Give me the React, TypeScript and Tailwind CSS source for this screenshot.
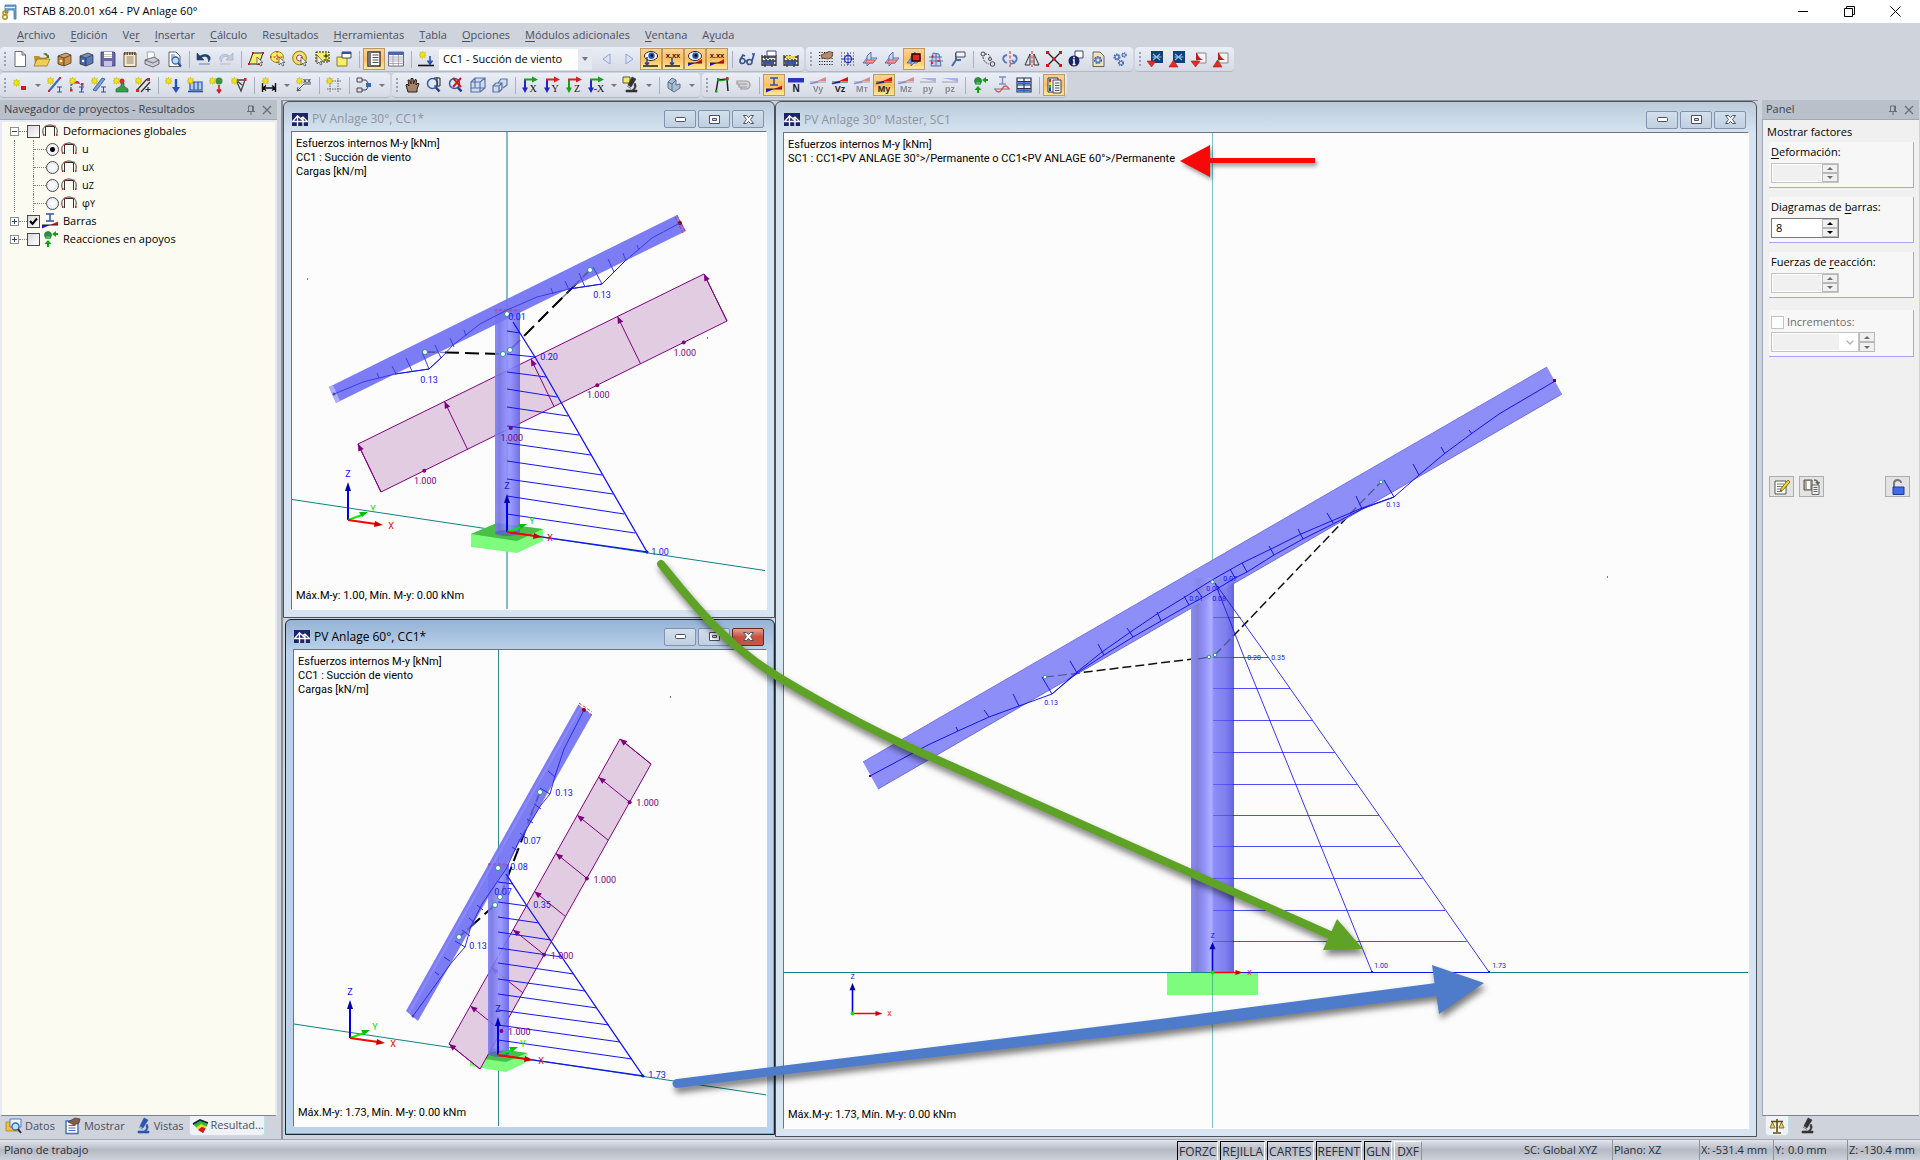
import { useState } from "react";
import type { ReactNode } from "react";
import clsx from "clsx";

const UI = "font-['Open_Sans','Noto_Sans',sans-serif]";
const VIEW = "font-['Roboto','Liberation_Sans',sans-serif]";

type Pt = [number, number];

const pts = (list: Pt[]) => list.map((p) => p.join(",")).join(" ");

const lerp = (a: Pt, b: Pt, t: number): Pt => [
  a[0] + (b[0] - a[0]) * t,
  a[1] + (b[1] - a[1]) * t,
];

/* ---------- toolbar icons, 16x16 ---------- */

function Star({ x = 0, y = 0 }: { x?: number; y?: number }) {
  return (
    <path
      transform={`translate(${x} ${y})`}
      d="M3.5 0l.8 2.2L6.5 1.2 5.6 3.4 7 4.2l-1.7.5.8 2-2-1L3.5 7.6l-.7-2-2 1 .8-2L0 4l1.7-.7L.8 1.2 2.8 2z"
      fill="#f4e60a"
      stroke="#b8a000"
      strokeWidth=".4"
    />
  );
}

const Cursor = () => (
  <path d="M9 6v8l2-2 1.5 3 1.5-.7L12.6 11.5H15z" fill="#eee" stroke="#444" strokeWidth=".7" />
);

const Lens = ({ mark }: { mark?: ReactNode }) => (
  <>
    <path d="M9.5 10l4 4.5" stroke="#2c3f86" strokeWidth="2.6" />
    <circle cx="6.5" cy="6.5" r="5" fill="#dce9fb" stroke="#3b58a8" strokeWidth="1.5" />
    {mark}
  </>
);

function Moment({ name, dim, flip }: { name: string; dim?: boolean; flip?: boolean }) {
  return (
    <g opacity={dim ? 0.45 : 1}>
      {flip ? (
        <path d="M0 1h16v3.5z" fill="#6a6af0" />
      ) : (
        <>
          <path d="M0 6.5L8 4v1.5L0 7z" fill="#1414d8" stroke="#1414d8" strokeWidth=".6" />
          <path d="M8 3.5L16 0v4H8z" fill="#e01010" />
        </>
      )}
      <path d="M0 5h16" stroke="#222" strokeWidth=".8" />
      <text x="8" y="15" textAnchor="middle" fontSize="9" fontWeight="bold" fontFamily="Liberation Sans, sans-serif" fill="#222">
        {name}
      </text>
    </g>
  );
}

function AxisIcon({ name, across, down }: { name: string; across: string; down: string }) {
  return (
    <>
      <path d="M3 2v12" stroke={down} strokeWidth="2" />
      <path d="M0 10.5h6L3 16z" fill={down} />
      <path d="M2 2.5h10" stroke={across} strokeWidth="2" />
      <path d="M10-.5l6 3-6 3z" fill={across} />
      <text x="11" y="15" textAnchor="middle" fontSize="10" fontFamily="Liberation Serif, serif" fill="#111">
        {name}
      </text>
    </>
  );
}

const Plane = ({ hot }: { hot?: boolean }) => (
  <g>
    <path d="M1 12l4-5h10l-4 5z" fill={hot ? "#8fb0f0" : "#c9d8f4"} stroke="#4a68a8" strokeWidth=".9" />
    <path d="M5 5l4-4v10l-4 4z" fill={hot ? "#8fb0f0" : "#c9d8f4"} stroke="#4a68a8" strokeWidth=".9" />
    {hot ? (
      <path d="M6 3h8v7H6z" fill="#ef2418" stroke="#200" strokeWidth="1.4" />
    ) : (
      <path d="M5 9h8l-2 3H3z" fill="#e8a0a0" stroke="#d05050" strokeWidth=".9" />
    )}
  </g>
);

const Frame = () => (
  <>
    <path d="M3.5 13V3.5h9V13M1.5 12C0 8 1 4 3.5 3.5 6 1.5 10 1.5 12.5 3.5 15 4 16 8 14.5 12" fill="none" stroke="#333" />
    <path d="M3 2.5h1.5V4H3zM12 2.5h1.5V4H12zM1 11h1.5v2H1zM14 11h1.5v2H14z" fill="#d22" />
  </>
);

const Support = () => (
  <>
    <circle cx="6" cy="4" r="3.5" fill="#2f9144" stroke="#15602a" strokeWidth=".6" />
    <path d="M3 8h6L7.5 5h-3z" fill="#54b468" />
    <path d="M6 16v-4M16 3h-3" fill="none" stroke="#08a808" strokeWidth="2" />
    <path d="M2.5 13L6 9l3.5 4zM14 0v6l-4-3z" fill="#08a808" />
  </>
);

const Cube = ({ color }: { color: string }) => (
  <>
    <path d="M2 5l8-3 5 2-7 3z" fill={color} opacity=".7" />
    <path d="M2 5l6 2v8l-6-2z" fill={color} />
    <path d="M8 7l7-3v8l-7 3z" fill={color} opacity=".85" />
    <path d="M2 5l8-3 5 2v8l-7 3-6-2zM8 7v8M8 7l7-3M2 5l6 2" fill="none" stroke="#33291a" strokeWidth=".7" />
    <circle cx="5" cy="10" r="1.3" fill="#f5e9c8" />
  </>
);

const Eye = () => (
  <>
    <ellipse cx="8" cy="5" rx="6.5" ry="4.5" fill="#fff" stroke="#222" />
    <circle cx="8.5" cy="4.7" r="3.2" fill="#2b55b8" />
    <circle cx="8.8" cy="4.5" r="1.3" fill="#000" />
  </>
);

const RedBlue = () => (
  <>
    <path d="M1 15l7-3H1z" fill="#1818e0" />
    <path d="M8 12l7-4v4z" fill="#e01010" />
    <path d="M1 12h14" stroke="#222" />
  </>
);

const XX = () => (
  <text x="8" y="6.5" textAnchor="middle" fontSize="7.5" fontWeight="bold" fontFamily="Liberation Sans, sans-serif" fill="#222">
    x.xx
  </text>
);

const Abacus = () => (
  <path d="M1 4v11M15 4v11M1 6h14M1 10h14M1 14h14M4 4v4M7 4v4M5 8v4M9 8v4M12 8v4M4 12v4M11 12v4" stroke="#333" strokeWidth="1.3" fill="none" />
);

const Xls = ({ up, red }: { up?: boolean; red?: boolean }) => (
  <>
    {red ? (
      <path d="M6 2h9v10H6z" fill="#f4f4f8" stroke="#888" />
    ) : (
      <>
        <path d="M4 0h12v12H4z" fill="#123f78" />
        <path d="M6 3l7 6M13 3L6 9M5.5 6h9" stroke="#7fc4ee" strokeWidth="1.2" />
      </>
    )}
    {red && <path d="M5 1c2 3 3 6 7 8H5z" fill="#b81c1c" />}
    <path d={up ? "M0 16h9L4.5 9z" : "M0 10h9l-4.5 6z"} fill="#e62c22" stroke="#8c120c" strokeWidth=".5" />
  </>
);

const Gear = ({ x, y, r }: { x: number; y: number; r: number }) => (
  <>
    <circle cx={x} cy={y} r={r} fill="none" stroke="#3d5ea8" strokeWidth={r * 0.7} strokeDasharray={`${r * 0.55} ${r * 0.3}`} />
    <circle cx={x} cy={y} r={r * 0.75} fill="none" stroke="#5f80c8" strokeWidth={r * 0.5} />
  </>
);

const Page = ({ fill = "#fff" }: { fill?: string }) => (
  <path d="M3 1h7l4 4v10.5H3z" fill={fill} stroke="#555" strokeWidth=".9" />
);

const Micro = ({ c = "#333" }: { c?: string }) => (
  <path d="M9 0l4 2-5 8-3-2zM3 15h11v-2h-3c2-2 3-4 1-7l-1 2c1 2 0 4-2 5H3zM4 9l4 2.5" fill={c} stroke={c} strokeWidth=".6" />
);

const Hand = () => (
  <path d="M4 15L2 8l1-1 2 2-1-6h1.5l1.5 4L7 1.500h2L9.500 7 11 2.500l1.500.5L12 8l2-2 1 .8-2 5.200v3z" fill="#a58468" stroke="#2a1e14" strokeWidth="1" />
);

const icons: Record<string, ReactNode> = {
  new: <path d="M3 .5h7L13.500 4v11.500H3zM10 .5V4h3.500" fill="#fff" stroke="#6b6b78" />,
  open: (
    <>
      <path d="M0 5h5l1.5 1.5H13V14H1z" fill="#b8922a" />
      <path d="M3 8h13l-3 7H0z" fill="#f0cd54" stroke="#8c6a14" strokeWidth=".7" />
      <path d="M9 3c3-2 4-1 5 1.5l1-1V7h-3l1-1c-1-2-2-2-4-3z" fill="#4d7a28" />
    </>
  ),
  boxBrown: <Cube color="#c8862c" />,
  boxBlue: <Cube color="#3d66b8" />,
  save: (
    <>
      <path d="M1 1h13l1 1v13H1z" fill="#6a66a8" stroke="#3d3a78" strokeWidth=".8" />
      <path d="M4 1h8v6H4z" fill="#fff" />
      <path d="M4 10h8v5H4z" fill="#c6c4dc" />
      <path d="M4 3.5h8M4 5.5h8" stroke="#aaa" strokeWidth=".7" />
    </>
  ),
  notes: (
    <>
      <path d="M2 2h12v13.5H2z" fill="#f4ecd2" stroke="#6b5636" />
      <path d="M2 2.5h12" stroke="#6b4a2c" strokeWidth="3" strokeDasharray="1.5 1" />
      <path d="M4.5 6h7M4.5 8h7M4.5 10h7M4.5 12h7" stroke="#8d7f66" />
    </>
  ),
  print: (
    <>
      <path d="M3 1h7l1 6-7 2z" fill="#fff" stroke="#889" strokeWidth=".7" />
      <path d="M1 9l9-3 5 3v4l-6 3-8-3z" fill="#c8ccd6" stroke="#555" strokeWidth=".8" />
      <path d="M1 9l8 3 6-3" fill="none" stroke="#555" strokeWidth=".8" />
    </>
  ),
  preview: (
    <>
      <Page />
      <path d="M5 4h4M5 6h6M5 8h4" stroke="#77a" />
      <circle cx="9.5" cy="9.5" r="3.5" fill="#bcdcf6" stroke="#3468b0" strokeWidth="1.3" />
      <path d="M12 12l3 3.5" stroke="#2c4f90" strokeWidth="2" />
    </>
  ),
  undo: <path d="M1 2v7h7L5.500 6.500C9 4 13 6 12.500 11 17 6 12 1 4 5zM3 13h11" fill="#24406e" stroke="#24406e" strokeWidth=".6" />,
  redo: <path d="M15 2v7H8l2.500-2.500C7 4 3 6 3.500 11-1 6 4 1 12 5zM2 13h11" fill="#c6cddc" stroke="#9aa5bc" strokeWidth=".6" />,
  selRhomb: (
    <>
      <path d="M5 2h10l-4 11H1z" fill="#f7ef6a" stroke="#222" />
      <path d="M4 1h2v2H4zM14 1h2v2h-2zM0 12h2v2H0zM10 12h2v2h-2z" fill="#e01010" />
      <Cursor />
    </>
  ),
  selEllipse: (
    <>
      <ellipse cx="7" cy="6" rx="6.5" ry="5.5" fill="#f7ef6a" stroke="#a08a10" />
      <path d="M7 0v12M0 6h14" stroke="#e01010" strokeDasharray="2 1.5" />
      <Cursor />
    </>
  ),
  selRing: (
    <>
      <circle cx="7.5" cy="7" r="6" fill="none" stroke="#f0e040" strokeWidth="3" />
      <circle cx="7.5" cy="7" r="6.8" fill="none" stroke="#555" strokeWidth=".7" />
      <circle cx="7.5" cy="7" r="3" fill="#fff" stroke="#d22" />
      <Cursor />
    </>
  ),
  selPlus: (
    <>
      <path d="M2 1h13v10H2z" fill="#f7ef6a" stroke="#222" strokeDasharray="2 1" />
      <path d="M12 2.5v5M9.5 5h5M9.5 9h5" stroke="#111" />
      <path d="M3 4v9l2-2 1.5 3 1.5-.7L6.5 10.5H9z" fill="#eee" stroke="#444" strokeWidth=".7" />
    </>
  ),
  selWindow: (
    <>
      <path d="M1 6h10v9H1z" fill="#f7ef6a" stroke="#8a7c1c" />
      <path d="M6 1h9v6H6z" fill="#fff" stroke="#446" />
      <path d="M6 2h9" stroke="#33539a" strokeWidth="2" />
    </>
  ),
  navigator: (
    <>
      <path d="M2 1h12v14H2z" fill="#fff" stroke="#333" strokeWidth="1.4" />
      <path d="M2.5 1H5v14H2.500z" fill="#777" />
      <path d="M6.5 4h6M6.5 6.5h6M6.5 9h6M6.5 11.5h6" stroke="#4c4c60" />
    </>
  ),
  table: (
    <>
      <path d="M.5 1h15v14H.5z" fill="#fff" stroke="#667" />
      <path d="M.5 2.5h15" stroke="#4c67a8" strokeWidth="3" />
      <path d="M.5 6h15M.5 8h15M.5 10h15M.5 12.5h15M5 4v11M10.500 4v11" stroke="#99a" strokeWidth=".8" />
    </>
  ),
  loadCase: (
    <>
      <Star x={1} />
      <path d="M0 14.5h16" stroke="#111" strokeWidth="1.6" />
      <path d="M12 5v7M9.5 9.5L12 13l2.500-3.500" fill="none" stroke="#2a4fb4" strokeWidth="1.6" />
    </>
  ),
  prev: <path d="M11 3v10L4 8z" fill="#dce4f6" stroke="#8fa3d8" />,
  next: <path d="M5 3v10l7-5z" fill="#dce4f6" stroke="#8fa3d8" />,
  eyeLoad: (
    <>
      <Eye />
      <path d="M0 15h15" stroke="#111" strokeWidth="1.4" />
      <path d="M4 6v8M2 11.5L4 14l2-2.500" fill="none" stroke="#24478e" strokeWidth="1.5" />
    </>
  ),
  valLoad: (
    <>
      <XX />
      <path d="M0 15h15" stroke="#111" strokeWidth="1.4" />
      <path d="M7 7v7M5 11.5L7 14l2-2.500" fill="none" stroke="#24478e" strokeWidth="1.5" />
    </>
  ),
  eyeRes: (
    <>
      <Eye />
      <RedBlue />
    </>
  ),
  valRes: (
    <>
      <XX />
      <RedBlue />
    </>
  ),
  glasses: (
    <path d="M1 10a2.500 2.500 0 105 0 2.500 2.500 0 10-5 0M8 11a2.500 2.500 0 105 0 2.500 2.500 0 10-5 0M6 10l2.500 0M1 9l3-5 2 1M13 10l2-7-2 0" fill="none" stroke="#3a548c" strokeWidth="1.7" />
  ),
  abacus1: (
    <>
      <Abacus />
      <path d="M6 0h9v5H6z" fill="#fff" stroke="#446" />
      <path d="M2 10.5h11v3H2z" fill="#3455b0" />
    </>
  ),
  abacus2: (
    <>
      <Abacus />
      <path d="M3 5h9v2.5H3z" fill="#e8da40" />
      <path d="M2 10.5h11v3H2z" fill="#3455b0" />
    </>
  ),
  gridHand: (
    <>
      <path d="M1 1.5h14M1 4.5h14M1 7.500h14M1 10.5h14M1 13.5h14" stroke="#222" strokeDasharray="1.2 1.3" />
      <path d="M3 4l8-3.500 4 1-1 4.500-4 2-6-1z" fill="#b48a68" stroke="#47311e" strokeWidth=".7" />
    </>
  ),
  gridSnap: (
    <>
      <path d="M1 2h14M1 5h14M1 8h14M1 11h14M1 14h14" stroke="#333" strokeDasharray="1 2" />
      <circle cx="8" cy="8" r="3.5" fill="#fff" stroke="#2434b8" strokeWidth="1.3" />
      <path d="M8 2v12M2 8h12" stroke="#2434b8" />
    </>
  ),
  plane1: <Plane />,
  plane2: <Plane />,
  plane3: <Plane hot />,
  building: (
    <>
      <path d="M3 15L5 2l6 1 2 12zM1 6h13M1 10h14M8 2v13" fill="#c5d3ee" stroke="#556fa6" />
      <path d="M3.5 4.5h2v2h-2zM9.5 9h2v2h-2zM3 11h2v2H3z" fill="#d22" />
    </>
  ),
  planeSet: (
    <>
      <path d="M2 15l4-6h5M6 9V2" fill="none" stroke="#4a68a4" strokeWidth="2" />
      <path d="M6 1h9v5H6z" fill="#f4f4fa" stroke="#446" />
    </>
  ),
  nodes: (
    <>
      <circle cx="3" cy="3" r="2" fill="none" stroke="#444" />
      <circle cx="12.5" cy="13" r="2.3" fill="none" stroke="#444" />
      <circle cx="10" cy="8" r="1.5" fill="none" stroke="#444" />
      <path d="M5 3c4 0 5 1 5 3M3 6c0 3 2 6 6 7" fill="none" stroke="#444" strokeDasharray="2 1" />
    </>
  ),
  rotate: (
    <>
      <path d="M5 4C0 5 0 10 5 12M11 4c5 1 5 6 0 8M8 13l4-1-2-3" fill="none" stroke="#5577bb" strokeWidth="1.8" />
      <path d="M8 0v16" stroke="#d22" strokeDasharray="3 1.5" />
    </>
  ),
  mirror: (
    <>
      <path d="M6 3v11H1zM10 3v11h5z" fill="none" stroke="#333" />
      <path d="M8 0v16" stroke="#d22" strokeDasharray="3 1.5" />
    </>
  ),
  cross: (
    <>
      <path d="M2 2l12 12M14 2L2 14" stroke="#222" strokeWidth="1.4" />
      <path d="M0 0h3v3H0zM13 0h3v3h-3zM0 13h3v3H0zM13 13h3v3h-3zM6.5 6.5h3v3h-3z" fill="#e01010" />
    </>
  ),
  info: (
    <>
      <path d="M7 0h8v7H7z" fill="#fff" stroke="#446" />
      <circle cx="6" cy="10" r="5.5" fill="#1b2266" />
      <path d="M6 5.8v1.8M4.8 9H6v4.5M4.5 13.5h3" stroke="#fff" strokeWidth="1.5" fill="none" />
    </>
  ),
  gearPage: (
    <>
      <Page fill="#f3e3bd" />
      <Gear x={8} y={9} r={3} />
    </>
  ),
  gears: (
    <>
      <Gear x={5} y={6} r={2.6} />
      <Gear x={12} y={4} r={2} />
      <Gear x={9} y={12} r={2.3} />
    </>
  ),
  xls1: <Xls />,
  xls2: <Xls up />,
  pdf1: <Xls red />,
  pdf2: <Xls red up />,

  addNode: (
    <>
      <Star x={1} y={2} />
      <path d="M9 9h5v4H9z" fill="#d81818" />
    </>
  ),
  addBar: (
    <>
      <path d="M2 14L13 1" stroke="#4169c0" strokeWidth="2" />
      <Star />
      <path d="M10 10h5M12.5 10v5M10 15h5" stroke="#2c4fa0" fill="none" />
      <path d="M12 0h2v2h-2zM1 13h2v2H1z" fill="#d22" />
    </>
  ),
  addArc: (
    <>
      <path d="M2 13V8l6-3 5 3v5" fill="none" stroke="#3d62b0" strokeWidth="1.4" strokeDasharray="3 1" />
      <Star />
      <path d="M10 10h5M12.5 10v5M10 15h5" stroke="#2c4fa0" fill="none" />
      <path d="M1 12h2.5v2.5H1zM7 4h2.5v2.5H7zM12 6h2.500v2.500H12z" fill="#d22" />
    </>
  ),
  addSurf: (
    <>
      <path d="M2 13l9-12 3 1L5 14z" fill="#7da0dc" stroke="#2c4f90" strokeWidth=".8" />
      <Star />
      <path d="M10 10h5M12.5 10v5M10 15h5" stroke="#2c4fa0" fill="none" />
    </>
  ),
  addSupport: (
    <>
      <circle cx="9" cy="4" r="2.5" fill="#d83030" />
      <path d="M8 6h3v3l4 3v3H3v-3l5-3z" fill="#3a9a4c" stroke="#1d6630" strokeWidth=".6" />
      <Star />
    </>
  ),
  addHinge: (
    <>
      <path d="M2 13L12 2M6 15L15 5" stroke="#333" strokeWidth="1.3" />
      <Star />
      <path d="M12 1h3v3h-3zM1 12h3v3H1z" fill="#d22" />
      <path d="M13 10v5M10.5 12.5h5" stroke="#222" />
    </>
  ),
  load1: (
    <>
      <Star />
      <path d="M11 2v9" stroke="#2a50b8" strokeWidth="2.4" />
      <path d="M7 10h8l-4 6z" fill="#2a50b8" />
    </>
  ),
  load2: (
    <>
      <path d="M3 5h12v8H3zM7 5v8M11 5v8" fill="#b7cdf4" stroke="#2a50b8" strokeWidth="1.2" />
      <path d="M1 14.5h15" stroke="#2a50b8" strokeWidth="1.6" />
      <Star />
    </>
  ),
  load3: (
    <>
      <circle cx="10" cy="4" r="3.5" fill="#379148" />
      <path d="M10 8v7M8 12.5l2 3 2-3" fill="none" stroke="#d01c1c" strokeWidth="1.6" />
      <Star />
    </>
  ),
  load4: (
    <>
      <path d="M5 3h9l-4 11zM5 3l6 5" fill="none" stroke="#444" strokeWidth="1.3" />
      <path d="M13 1h2.5v3H13z" fill="#d22" />
      <Star />
    </>
  ),
  dim: (
    <>
      <path d="M1.5 6v9M14.5 6v9M2 11h12M5 8.5L2 11l3 2.5M11 8.5l3 2.5-3 2.500" fill="none" stroke="#111" strokeWidth="1.4" />
      <Star x={1} />
    </>
  ),
  comment: (
    <>
      <path d="M1 14L8 7h7M1 14l1-4M1 14l4-1" fill="none" stroke="#555" />
      <text x="11" y="6" textAnchor="middle" fontSize="7" fontWeight="bold" fontFamily="Liberation Sans, sans-serif" fill="#444">
        xx
      </text>
      <Star />
    </>
  ),
  guide: (
    <>
      <path d="M4 1v15M12 1v15M1 4h15M1 12h15" stroke="#666" strokeDasharray="1.5 1" />
      <Star />
    </>
  ),
  scheme: (
    <>
      <path d="M1 1h5v4H1zM1 11h5v4H1z" fill="none" stroke="#444" />
      <path d="M6 3h4l2 3M6 13h4l2-3" fill="none" stroke="#444" />
      <path d="M10 6h5v4h-5z" fill="#3566b8" />
    </>
  ),
  hand: <Hand />,
  zoomWin: <Lens mark={<path d="M8 1h6v8H8M11 0v8" fill="none" stroke="#222" />} />,
  zoomOut: <Lens mark={<path d="M5 1l8 9M13 1l-8 9" stroke="#d01818" strokeWidth="2" />} />,
  iso: <path d="M1 5h9v10H1zM1 5l4-4h10v10l-5 4M10 5l5-4M5 1v10H1M5 11h10" fill="#cfdbef" stroke="#5a74a8" strokeWidth="1.2" />,
  cubes: <path d="M1 9h6v6H1zM1 9l3-3h6v6l-3 3M7 9l3-3M6 6l3-4h6v6l-4 3" fill="#cfdbef" stroke="#5a74a8" strokeWidth="1.2" />,
  axX: <AxisIcon name="X" across="#18a018" down="#2222d0" />,
  axY: <AxisIcon name="Y" across="#d82020" down="#2222d0" />,
  axZ: <AxisIcon name="Z" across="#d82020" down="#18a018" />,
  axMX: <AxisIcon name="-X" across="#18a018" down="#2222d0" />,
  micro: (
    <>
      <path d="M0 0h7v6H0z" fill="#f4ec60" stroke="#555" />
      <Micro />
    </>
  ),
  solid: <path d="M2 5l4-4 4 2v5l4-1v4l-6 4-6-4zM2 5l4 2v7M6 7l4-4" fill="#a9bfd0" stroke="#57708a" />,
  deform: (
    <>
      <path d="M2 15L4 3l9-1 1 12" fill="none" stroke="#222" strokeWidth="1.5" />
      <path d="M4 3c3 1 6 1 9-1" fill="none" stroke="#18a018" strokeWidth="1.4" />
      <path d="M1 13h2.5v2.5H1zM3 1h2.5v2.5H3zM12 1h2.5v2.5H12z" fill="#18a018" />
      <path d="M12 0h2.5v3H12z" fill="#d22" />
    </>
  ),
  pill: <path d="M1 4h9a4 4 0 010 8H5v-2H3V7H1zM5 10h6M3 7h8" fill="#d4d4da" stroke="#999" strokeWidth="1.2" />,
  barRes: (
    <>
      <path d="M4 1h8M8 1v7M4 8h8" stroke="#3052a4" strokeWidth="1.5" fill="none" />
      <path d="M0 15.5l8-3.5H0z" fill="#1818e0" />
      <path d="M8 12l8-3.5V12z" fill="#e01010" />
      <path d="M0 12h16" stroke="#222" />
    </>
  ),
  N: (
    <>
      <path d="M0 1h16v4.5H0z" fill="#2c34c8" />
      <text x="8" y="15" textAnchor="middle" fontSize="10" fontWeight="bold" fontFamily="Liberation Sans, sans-serif" fill="#222">
        N
      </text>
    </>
  ),
  Vy: <Moment name="Vy" dim />,
  Vz: <Moment name="Vz" />,
  MT: <Moment name="Mт" dim />,
  My: <Moment name="My" />,
  Mz: <Moment name="Mz" dim />,
  py: <Moment name="py" dim flip />,
  pz: <Moment name="pz" dim flip />,
  support: <Support />,
  section: (
    <>
      <path d="M5 0h7M8.5 0v7M5 7h7" stroke="#7f92c0" strokeWidth="1.5" fill="none" />
      <path d="M0 12h16" stroke="#777" />
      <path d="M1 12c2 4 5 4 7 0s5-4 7 0" fill="none" stroke="#d05858" strokeWidth="1.3" />
    </>
  ),
  resTable: (
    <>
      <path d="M1 1h14v14H1zM1 4.5h14M1 8h14M1 11.5h14M8 1v14" fill="#e8eefb" stroke="#28324e" strokeWidth="1.2" />
      <path d="M2 6.2h12M2 13.2h12" stroke="#2e62cc" strokeWidth="2" />
    </>
  ),
  panel: (
    <>
      <path d="M2 1h10v14H2z" fill="#fff" stroke="#333" />
      <path d="M3 2h2v3H3z" fill="#d22" />
      <path d="M3 5h2v3H3z" fill="#e8d820" />
      <path d="M3 8h2v3H3z" fill="#24b030" />
      <path d="M3 11h2v3H3z" fill="#2440c0" />
      <path d="M7 3h8v13H7z" fill="#f4f4f4" stroke="#444" />
      <path d="M9 6h4.500M9 8.500h4.500M9 11h4.500M9 13.500h4.500" stroke="#555" />
    </>
  ),

  frame: <Frame />,
  tabData: (
    <>
      <path d="M0 4h5l1 1h7v8H0z" fill="#f0bd3c" stroke="#a87818" strokeWidth=".7" />
      <path d="M4 1h11v8H4z" fill="#eef4fd" stroke="#4c7ad0" />
      <circle cx="9.5" cy="8.5" r="3.5" fill="#c4e0f8" stroke="#3468b0" strokeWidth="1.3" />
      <path d="M12 11l3 4" stroke="#333" strokeWidth="2" />
    </>
  ),
  tabShow: (
    <>
      <path d="M1 3h12v12.5H1z" fill="#fff" stroke="#3f6cc4" strokeWidth="1.4" />
      <path d="M3.5 7.5h7M3.5 10h7M3.5 12.5h7" stroke="#3f6cc4" strokeWidth="1.2" />
      <path d="M3 4l7-4 5 1-1 4-5 2z" fill="#7c6049" stroke="#3a2a1c" strokeWidth=".6" />
    </>
  ),
  tabViews: <Micro c="#2c55b0" />,
  tabResults: (
    <>
      <path d="M1 6l7-4 8 3-5 10z" fill="#2060d8" />
      <path d="M1 6l7-4 8 3-2 4-5-2-4 3z" fill="#30b83c" />
      <path d="M4 9.500L9 6l5.500 2.500-1 2L10 9l-4 3z" fill="#f4d81c" />
      <path d="M6 12l4-3 3.500 1.500L11 15z" fill="#d81818" />
      <path d="M1 6l7-4 8 3" fill="none" stroke="#123" strokeWidth="1.6" />
    </>
  ),
  scales: (
    <>
      <path d="M8 1v13M2 3.5h12M4 15h8" stroke="#5d4c0c" strokeWidth="1.6" />
      <path d="M3.5 4L1 10h5zM12.5 4L10 10h5z" fill="#f0d24a" stroke="#6d5a10" strokeWidth=".8" />
    </>
  ),
  microDark: <Micro />,
  edit: (
    <>
      <path d="M1 2h11v13H1z" fill="#fff" stroke="#555" />
      <path d="M3 5h7M3 7.5h7M3 10h5M3 12.5h5" stroke="#777" />
      <path d="M14 1l2 2-7 8-2.5 1L7 9.5z" fill="#f4dc20" stroke="#4a3d08" strokeWidth=".7" />
    </>
  ),
  copyPanel: (
    <>
      <path d="M0 1h8v10H0z" fill="#b5a99c" stroke="#555" />
      <path d="M3 2h3v8H3z" fill="#fff" />
      <path d="M8 6h7v9.5H8zM9.5 8.5h4M9.5 10.5h4M9.5 12.5h4" fill="#eee" stroke="#666" />
      <path d="M10 1c3 0 4 1 4 4M12 3l2 2 1.5-2" fill="none" stroke="#666" strokeWidth="1.5" />
    </>
  ),
  lock: (
    <>
      <path d="M4 8V4.500C4 0 11 0 11 4" fill="none" stroke="#777" strokeWidth="2" />
      <path d="M3 8h11v7.5H3z" fill="#3f6ce8" stroke="#1c3a9c" />
    </>
  ),
};

function Icon({ name, className = "size-4" }: { name: string; className?: string }) {
  return (
    <svg viewBox="0 0 16 16" className={clsx("shrink-0 overflow-visible", className)} aria-hidden="true">
      {icons[name]}
    </svg>
  );
}

/* ---------- toolbars ---------- */

// "|" separator, "v" drop-down caret, "*name" pressed button
function Tools({ items }: { items: string }) {
  return (
    <>
      {items.split(" ").map((it, i) => {
        if (it === "|")
          return (
            <span key={i} className="flex w-2 justify-center">
              <span className="h-[17px] w-px bg-[#aab0be]" />
            </span>
          );
        if (it === "v")
          return (
            <button key={i} aria-label="Más" className="flex w-[13px] justify-center">
              <span className="border-x-3 border-t-3 border-x-transparent border-t-[#777]" />
            </button>
          );
        const on = it.startsWith("*");
        const name = on ? it.slice(1) : it;
        return (
          <button
            key={i}
            aria-label={name}
            aria-pressed={on}
            className={clsx(
              "flex h-[22px] w-[22px] items-center justify-center border",
              on
                ? "border-[#b89a62] bg-linear-to-b from-[#fbd296] via-[#ffbf5e] to-[#ffe79a]"
                : "border-transparent hover:border-[#b89a62] hover:bg-[#ffe7b0]"
            )}
          >
            <Icon name={name} />
          </button>
        );
      })}
    </>
  );
}

function ToolGroup({ children }: { children: ReactNode }) {
  return (
    <div className="flex h-[25px] items-center rounded-sm border-b border-[#b3b8c4] bg-linear-to-b from-[#eaeef7] to-[#d6dae4] pr-[2px]">
      <span className="flex w-[9px] flex-col items-center gap-[2px]">
        {[0, 1, 2, 3].map((n) => (
          <span key={n} className="size-[2px] bg-[#9aa1b3]" />
        ))}
      </span>
      {children}
    </div>
  );
}

const menu: [string, string, string][] = [
  ["", "A", "rchivo"],
  ["", "E", "dición"],
  ["Ve", "r", ""],
  ["", "I", "nsertar"],
  ["", "C", "álculo"],
  ["Res", "u", "ltados"],
  ["", "H", "erramientas"],
  ["", "T", "abla"],
  ["", "O", "pciones"],
  ["", "M", "ódulos adicionales"],
  ["", "V", "entana"],
  ["A", "y", "uda"],
];

function Mnemonic({ parts }: { parts: [string, string, string] }) {
  return (
    <>
      {parts[0]}
      <span className="underline underline-offset-2">{parts[1]}</span>
      {parts[2]}
    </>
  );
}

function Header() {
  return (
    <header>
      <div className="flex h-[23px] items-center bg-white pl-[2px] text-black">
        <svg viewBox="0 0 16 16" className="size-4" aria-hidden="true">
          <path d="M3 1h11v14h-2V6H6v3H3z" fill="#6fa4d4" stroke="#3b6fa4" strokeWidth=".8" />
          <path d="M3 3.5h10" stroke="#e4f0fa" />
          <circle cx="3" cy="9" r="2" fill="none" stroke="#b89410" strokeWidth="1.6" />
          <circle cx="3" cy="13" r="2.2" fill="none" stroke="#b89410" strokeWidth="1.6" />
        </svg>
        <h1 className="pl-[5px] text-[11px]">RSTAB 8.20.01 x64 - PV Anlage 60°</h1>
        <div className="ml-auto flex pr-[2px]">
          <button aria-label="Minimizar" className="flex h-[23px] w-[46px] items-center justify-center">
            <span className="h-px w-[10px] bg-black" />
          </button>
          <button aria-label="Restaurar" className="flex h-[23px] w-[46px] items-center justify-center">
            <svg className="size-[11px]" viewBox="0 0 11 11">
              <path d="M.5 2.5h8v8h-8zM2.5 2.5v-2h8v8h-2" fill="none" stroke="#000" />
            </svg>
          </button>
          <button aria-label="Cerrar" className="flex h-[23px] w-[46px] items-center justify-center">
            <svg className="size-[11px]" viewBox="0 0 11 11">
              <path d="M.5 .5l10 10M10.5 .5l-10 10" stroke="#000" />
            </svg>
          </button>
        </div>
      </div>
      <nav className="flex h-6 items-center gap-px pl-[10px] text-[11px] text-[#4c4f5c]">
        {menu.map((m, i) => (
          <button key={i} className="px-[7px]">
            <Mnemonic parts={m} />
          </button>
        ))}
      </nav>
      <div className="flex h-[26px] gap-[2px]">
        <ToolGroup>
          <Tools items="new open boxBrown boxBlue save notes print preview | undo redo | selRhomb selEllipse selRing selPlus selWindow | *navigator table | loadCase" />
          <select aria-label="Caso de carga" className="mx-[2px] h-[21px] w-[153px] appearance-none bg-white bg-[linear-gradient(#e4e8f0,#e4e8f0)] bg-[length:14px_100%] bg-right bg-no-repeat px-1 text-[11px] text-black">
            <option>CC1 - Succión de viento</option>
          </select>
          <span className="-ml-3 mr-[8px] border-x-3 border-t-4 border-x-transparent border-t-[#777]" />
          <Tools items="prev next *eyeLoad *valLoad *eyeRes *valRes | glasses abacus1 abacus2" />
        </ToolGroup>
        <ToolGroup>
          <Tools items="gridHand gridSnap plane1 plane2 *plane3 building planeSet | nodes rotate mirror cross info gearPage gears" />
        </ToolGroup>
        <ToolGroup>
          <Tools items="xls1 xls2 pdf1 pdf2" />
        </ToolGroup>
      </div>
      <div className="flex h-[26px] gap-[2px]">
        <ToolGroup>
          <Tools items="addNode v addBar addArc addSurf addSupport addHinge | load1 load2 load3 load4 | dim v comment | guide | scheme v" />
        </ToolGroup>
        <ToolGroup>
          <Tools items="hand zoomWin zoomOut iso cubes | axX axY axZ axMX v micro v | solid v" />
        </ToolGroup>
        <ToolGroup>
          <Tools items="deform pill | *barRes N Vy Vz MT *My Mz py pz | support section resTable | *panel" />
        </ToolGroup>
      </div>
    </header>
  );
}

/* ---------- side panels ---------- */

function PanelTitle({ title }: { title: string }) {
  return (
    <div className="flex h-5 items-center gap-[6px] border-b border-[#a0a8b8] bg-[#b9c0ca] pl-1 pr-[5px] text-[#3c3f4c]">
      <h2 className="mr-auto text-[11px]">{title}</h2>
      <button aria-label="Fijar">
        <svg className="size-[10px]" viewBox="0 0 10 10">
          <path d="M2.5 6V1h5v5M1 6.5h8M5 7v3M6.5 1v5" fill="none" stroke="#6b6e78" />
        </svg>
      </button>
      <button aria-label="Cerrar panel">
        <svg className="size-[10px]" viewBox="0 0 10 10">
          <path d="M1 1l8 8M9 1L1 9" stroke="#6b6e78" strokeWidth="1.3" />
        </svg>
      </button>
    </div>
  );
}

const Expander = ({ open }: { open?: boolean }) => (
  <button
    aria-label={open ? "Contraer" : "Expandir"}
    className="z-10 flex size-[9px] shrink-0 items-center justify-center border border-[#8f8f8f] bg-white"
  >
    <svg className="size-[5px]" viewBox="0 0 5 5">
      <path d={open ? "M0 2.5h5" : "M0 2.5h5M2.5 0v5"} stroke="#28407c" />
    </svg>
  </button>
);

const BOX =
  "size-[13px] shrink-0 appearance-none border border-[#4a4a4a] bg-linear-to-br from-[#d9d9de] to-white";

function TreeNode({ label, icon, open, on }: { label: string; icon: string; open?: boolean; on?: boolean }) {
  const [checked, setChecked] = useState(!!on);
  return (
    <div className="flex h-[18px] items-center">
      <Expander open={open} />
      <span className="w-2 border-t border-dotted border-[#808080]" />
      <label className="flex items-center">
        <span className="relative flex">
          <input type="checkbox" checked={checked} onChange={() => setChecked(!checked)} className={BOX} />
          {checked && (
            <svg className="pointer-events-none absolute inset-0 size-[13px]" viewBox="0 0 13 13">
              <path d="M3 6l2.5 3L10 3.5" fill="none" stroke="#000" strokeWidth="2" />
            </svg>
          )}
        </span>
        <Icon name={icon} className="ml-[2px] size-4" />
        <span className="pl-[5px]">{label}</span>
      </label>
    </div>
  );
}

function Navigator() {
  const [dir, setDir] = useState("u");
  const tabs: [string, string][] = [
    ["Datos", "tabData"],
    ["Mostrar", "tabShow"],
    ["Vistas", "tabViews"],
    ["Resultad...", "tabResults"],
  ];
  return (
    <aside className="flex w-[277px] shrink-0 flex-col">
      <PanelTitle title="Navegador de proyectos - Resultados" />
      <div className="flex-1 border-2 border-b border-[#e6ebf5] border-b-[#7c828e] bg-[#fcfbf2] pl-2 text-[11px] text-black">
        <TreeNode label="Deformaciones globales" icon="frame" open />
        <div className="ml-1 border-l border-dotted border-[#808080] pl-[18px]">
          {["u", "uX", "uZ", "φY"].map((d) => (
            <div key={d} className="flex h-[18px] items-center border-l border-dotted border-[#808080]">
              <span className="w-3 border-t border-dotted border-[#808080]" />
              <label className="flex items-center">
                <input
                  type="radio"
                  name="deformacion"
                  checked={dir === d}
                  onChange={() => setDir(d)}
                  className="size-[13px] appearance-none rounded-full border border-[#4a4a4a] bg-radial from-white to-[#dfe3ec] checked:bg-[radial-gradient(circle,#000_0_2px,#f4f4f8_3px)]"
                />
                <Icon name="frame" className="ml-[2px] size-4" />
                <span className="pl-[5px]">
                  {d[0]}
                  <span className="text-[9px]">{d.slice(1)}</span>
                </span>
              </label>
            </div>
          ))}
        </div>
        <TreeNode label="Barras" icon="barRes" on />
        <TreeNode label="Reacciones en apoyos" icon="support" />
      </div>
      <div className="flex h-[23px] items-start pl-px text-[11px] text-[#4c4f5c]">
        {tabs.map(([label, icon], i) => (
          <button
            key={label}
            className={clsx(
              "flex h-5 items-center gap-[3px]",
              i === 3 ? "rounded-b border border-t-0 border-[#bfe0e4] bg-[#f0f2f6] pl-[2px]" : "px-[5px]"
            )}
          >
            <Icon name={icon} />
            {label}
          </button>
        ))}
      </div>
    </aside>
  );
}

function SpinButtons({ dim }: { dim?: boolean }) {
  return (
    <span className="flex w-4 flex-col">
      <button aria-label="Más" className="flex flex-1 items-center justify-center border border-[#b8b8b8] bg-[#f0f0f0]">
        <span className={clsx("border-x-3 border-b-3 border-x-transparent", dim ? "border-b-[#6d6d6d]" : "border-b-black")} />
      </button>
      <button aria-label="Menos" className="flex flex-1 items-center justify-center border border-[#b8b8b8] bg-[#f0f0f0]">
        <span className={clsx("border-x-3 border-t-3 border-x-transparent", dim ? "border-t-[#6d6d6d]" : "border-t-black")} />
      </button>
    </span>
  );
}

function Factor({ id, parts, value }: { id: string; parts: [string, string, string]; value?: string }) {
  return (
    <div className="mb-[9px] flex h-[46px] flex-col justify-between border-b border-r border-[#a6a6ee] bg-[#f7f7f7] pb-1 pl-[2px] pt-[2px]">
      <label htmlFor={id} className="text-[11px]">
        <Mnemonic parts={parts} />
      </label>
      <div className={clsx("flex h-5 w-[68px] shrink-0 border", value ? "border-[#7a7a7a]" : "border-[#c3c3c3]")}>
        <input
          id={id}
          defaultValue={value}
          disabled={!value}
          className={clsx("w-[50px] pl-1 text-[11px]", value ? "bg-white" : "border border-white bg-[#f0f0f0]")}
        />
        <SpinButtons dim={!value} />
      </div>
    </div>
  );
}

function FactorsPanel() {
  return (
    <aside className="ml-1 flex w-[158px] shrink-0 flex-col pr-px text-black">
      <PanelTitle title="Panel" />
      <div className="flex-1 border-l border-[#a0a8b8] border-b border-b-[#7c828e] bg-[#f0f0f0] pl-[6px] pr-[5px] pt-1">
        <h3 className="-ml-[2px] mb-[2px] text-[11px] leading-4">Mostrar factores</h3>
        <Factor id="f-def" parts={["", "D", "eformación:"]} />
        <Factor id="f-bar" parts={["Diagramas de ", "b", "arras:"]} value="8" />
        <Factor id="f-rea" parts={["Fuerzas de ", "r", "eacción:"]} />
        <div className="mt-3 flex h-[47px] flex-col justify-between border-b border-r border-[#a6a6ee] bg-[#f7f7f7] pb-1 pl-[2px] pt-1">
          <label className="flex items-center gap-[3px] text-[11px] leading-4 text-[#6d6d6d]">
            <input type="checkbox" disabled className="size-[13px] appearance-none border border-[#c3c3c3] bg-white" />
            Incrementos:
          </label>
          <div className="flex h-5 shrink-0">
            <div className="flex w-[88px] items-center border border-[#c3c3c3] bg-white">
              <select aria-label="Incrementos" disabled className="h-full w-[68px] appearance-none border border-white bg-[#f0f0f0]" />
              <svg className="ml-[6px] size-2" viewBox="0 0 8 8">
                <path d="M.5 2.5L4 6l3.5-3.500" fill="none" stroke="#b0b0b0" strokeWidth="1.3" />
              </svg>
            </div>
            <SpinButtons dim />
          </div>
        </div>
        <div className="mt-[119px] flex gap-[5px] pr-1">
          {["edit", "copyPanel", "lock"].map((n) => (
            <button
              key={n}
              aria-label={n}
              className="flex h-[21px] w-[25px] items-center justify-center border border-[#adadad] bg-[#e3e3e3] last:ml-auto"
            >
              <Icon name={n} />
            </button>
          ))}
        </div>
      </div>
      <div className="flex h-[23px] items-start gap-2 pl-[3px]">
        <button aria-label="Factores" className="flex h-5 w-6 items-center justify-center rounded-b border border-t-0 border-[#bfe0e4] bg-[#f0f2f6]">
          <Icon name="scales" />
        </button>
        <button aria-label="Filtro" className="flex h-5 w-5 items-center justify-center">
          <Icon name="microDark" />
        </button>
      </div>
    </aside>
  );
}

/* ---------- model drawings ---------- */

const BLUE = "#1414f0";
const PURPLE = "#800080";

function Label({ x, y, children, color = BLUE, size = 9 }: { x: number; y: number; children: string; color?: string; size?: number }) {
  return (
    <text x={x} y={y + size * 0.36} textAnchor="middle" fontSize={size} fill={color} stroke="none">
      {children}
    </text>
  );
}

function Axes({ x, y, withY = true }: { x: number; y: number; withY?: boolean }) {
  const s = withY ? 1 : 0.8;
  const sz = withY ? 9 : 7;
  return (
    <g transform={`translate(${x} ${y})`}>
      <path d={`M0 0V${-30 * s}`} stroke="#0000e0" strokeWidth={2 * s} />
      <path d={`M0 ${-38 * s}l3 ${9 * s}h-6z`} fill="#0000b4" />
      {withY ? (
        <>
          <path d="M0 0l14-5" stroke="#00f000" strokeWidth="2" />
          <path d="M20-8l-9 0 3 5z" fill="#00c000" />
          <path d="M0 0l28 4" stroke="#f00" strokeWidth="2" />
          <path d="M35 5l-8-4-1 6z" fill="#c80000" />
          <Label x={25} y={-11} color="#00e000">Y</Label>
          <Label x={43} y={6} color="#f00000">X</Label>
        </>
      ) : (
        <>
          <path d="M0 0h24" stroke="#f00" strokeWidth="1.5" />
          <path d="M30 0l-7-2.500v5z" fill="#c80000" />
          <circle r="2" fill="#0e0" />
          <Label x={37} y={0} color="#f00000" size={sz}>X</Label>
        </>
      )}
      <Label x={0} y={-46.5 * s} size={sz}>Z</Label>
    </g>
  );
}

const Hinge = ({ at, r = 2.5 }: { at: Pt; r?: number }) => (
  <circle cx={at[0]} cy={at[1]} r={r} fill="#fff" stroke="#2a9090" strokeWidth="1" />
);

// Line load as a band: "a" is the arrow side, "b" the side with the values
function LoadBand({ a, b, panels }: { a: [Pt, Pt]; b: [Pt, Pt]; panels: number }) {
  const steps = Array.from({ length: panels + 1 }, (_, i) => i / panels);
  return (
    <g stroke={PURPLE} strokeWidth="1">
      <polygon points={pts([a[0], a[1], b[1], b[0]])} fill="#e2cce2" />
      {steps.map((t) => {
        const tip = lerp(a[0], a[1], t);
        const base = lerp(b[0], b[1], t);
        const ang = (Math.atan2(tip[1] - base[1], tip[0] - base[0]) * 180) / Math.PI;
        return (
          <g key={t}>
            <line x1={base[0]} y1={base[1]} x2={tip[0]} y2={tip[1]} />
            <path d="M0 0l-7-3v6z" fill={PURPLE} stroke="none" transform={`translate(${tip[0]} ${tip[1]}) rotate(${ang})`} />
          </g>
        );
      })}
    </g>
  );
}

function LoadValues({ b, offset }: { b: [Pt, Pt]; offset: Pt }) {
  return (
    <>
      {[0.125, 0.375, 0.625, 0.875].map((t) => {
        const p = lerp(b[0], b[1], t);
        return (
          <g key={t}>
            <circle cx={p[0]} cy={p[1]} r="2" fill={PURPLE} />
            <Label x={p[0] + offset[0]} y={p[1] + offset[1]} color={PURPLE}>
              1.000
            </Label>
          </g>
        );
      })}
    </>
  );
}

function Gradients() {
  return (
    <svg className="absolute size-0" aria-hidden="true">
      <defs>
        <linearGradient id="col">
          <stop offset="0" stopColor="#7b7bf2" />
          <stop offset=".18" stopColor="#6e6ee0" />
          <stop offset=".4" stopColor="#8484fc" />
          <stop offset=".6" stopColor="#8e8eff" />
          <stop offset="1" stopColor="#5e5ee8" />
        </linearGradient>
        <linearGradient id="colBig">
          <stop offset="0" stopColor="#8c8cf4" />
          <stop offset=".15" stopColor="#8181d8" />
          <stop offset=".3" stopColor="#9090fa" />
          <stop offset=".47" stopColor="#b0b0ff" />
          <stop offset=".53" stopColor="#8e8ef8" />
          <stop offset=".8" stopColor="#8080ee" />
          <stop offset="1" stopColor="#6464e4" />
        </linearGradient>
      </defs>
    </svg>
  );
}

function View30() {
  const left = [199, 222, 240, 257, 275, 294, 311, 329, 347, 364, 382];
  const right: Pt[] = [
    [228, 201], [243, 225], [254, 245], [265, 265], [276, 284], [287, 303],
    [299, 323], [310, 343], [321, 362], [332, 382], [343, 401],
  ];
  return (
    <>
      <path d="M215 0V1000" stroke="#80c0c0" strokeWidth="2" />
      <path d="M0 367.5L473 438.5" stroke="#108080" />
      <polygon points="179,402 205,391 251,397 251,409 225,421 179,415" fill="#7dfc7d" />
      <polygon points="179,402 205,391 251,397 225,409" fill="#48c048" />
      <LoadBand a={[[66, 312], [412, 142]]} b={[[89, 360], [435, 189]]} panels={4} />
      <path d="M133 220L211 222M218 218L298 138" stroke="#000" strokeWidth="2" strokeDasharray="14 6" />
      <rect x="203" y="177" width="25" height="224" fill="url(#col)" opacity=".88" />
      <ellipse cx="215" cy="401" rx="12" ry="3" fill="#5a5ab8" opacity=".7" />
      <path d="M215 177V400" stroke="#9494ff" />
      <polygon points="37,255 385,83 394,99 44,271" fill="#7272f4" opacity=".93" />
      <path d="M133 220l20 .5M270 166L298 138" stroke="#50508c" strokeWidth="1.5" strokeDasharray="10 5" opacity=".7" />
      <polygon points="37,255 41,253 48,269 44,271" fill="#b0b0f8" />
      <path d="M383 85l8 16M385 83l8 16" stroke="#d03060" strokeDasharray="3 2" />
      <circle cx="388" cy="91" r="2" fill="#800010" />
      <circle cx="42" cy="262" r="1.5" fill="#6040b0" />
      <g stroke="#3c3ce8">
        <path d="M42 262L71 250 103 242 137 237 150 225 161 213 188 192 215 178 245 165 277 157 310 152 322 140 333 129 360 106 388 91" />
        <path d="M130 220L137 237M143 213L149 226M158 206L162 215M172 198L174 204M114 226L120 239M100 234L104 242M85 241L87 246M301 135L310 152M316 127L322 140M331 121L334 129M345 113L347 118M287 141L293 155M273 149L277 158M259 156L261 162" />
      </g>
      <g stroke={BLUE}>
        <path d="M103 242L137 237 150 225M277 157L310 152 322 140 333 129" />
        <path d="M221 190L243 225 355 420 215 400" strokeWidth="1.3" />
        {left.map((y, i) => (
          <line key={y} x1={215} y1={y} x2={right[i][0]} y2={right[i][1]} />
        ))}
      </g>
      <circle cx="355" cy="420" r="1.5" fill={BLUE} />
      <path d="M202 178h23" stroke="#c04080" strokeDasharray="3 2" />
      <LoadValues b={[[89, 360], [435, 189]]} offset={[1, 10]} />
      <Hinge at={[133, 220]} />
      <Hinge at={[211, 222]} />
      <Hinge at={[218, 218]} />
      <Hinge at={[298, 138]} />
      <Hinge at={[215, 182]} />
      <Label x={310} y={163}>0.13</Label>
      <Label x={137} y={248}>0.13</Label>
      <Label x={225} y={185}>0.01</Label>
      <Label x={257} y={225}>0.20</Label>
      <Label x={368} y={420}>1.00</Label>
      <Axes x={56} y={388} />
      <Axes x={215} y={400} />
      <path d="M15 147h1M415 206h1" stroke="#000" />
    </>
  );
}

function View60() {
  const left = [232, 252, 267, 282, 298, 313, 329, 344, 360, 375, 390];
  const right: Pt[] = [
    [219, 234], [233, 256], [245, 273], [257, 290], [268, 307], [280, 324],
    [291, 341], [303, 358], [315, 375], [326, 392], [338, 409],
  ];
  return (
    <>
      <path d="M204.5 0V1000" stroke="#2a9090" />
      <path d="M0 374L473 445" stroke="#108080" />
      <polygon points="176,407 197,398 233,403 231,413 212,422 176,416" fill="#7dfc7d" />
      <polygon points="176,407 197,398 233,403 212,412" fill="#48c048" />
      <LoadBand a={[[326, 89], [155, 394]]} b={[[357, 114], [186, 419]]} panels={8} />
      <path d="M246 142L206 247M201 255L165 287" stroke="#000" strokeWidth="2" strokeDasharray="14 6" />
      <rect x="194" y="214" width="21" height="190" fill="url(#col)" opacity=".88" />
      <path d="M204.5 214V404" stroke="#9a9aff" />
      <ellipse cx="205" cy="404" rx="10" ry="3" fill="#5a5ab8" opacity=".7" />
      <polygon points="284,55 298,65 124,371 112,361" fill="#7272f4" opacity=".93" />
      <path d="M287 57L115 363" stroke="#9a9aff" strokeWidth="2" opacity=".5" />
      <path d="M246 142L234 172M181 273L165 287" stroke="#50508c" strokeWidth="1.5" strokeDasharray="10 5" opacity=".7" />
      <path d="M284 55l14 10M285 53l13 9" stroke="#d03060" strokeDasharray="3 2" />
      <circle cx="290" cy="60" r="2" fill="#800010" />
      <circle cx="119" cy="366" r="1.5" fill="#6040b0" />
      <path d="M194 214h20" stroke="#c04080" strokeDasharray="3 2" />
      <g stroke="#2c2cec">
        <path d="M290 60L270 99 261 126 256 144 247 155 225 191 212 219 188 254 177 276 171 297 158 312 119 366" />
        <path d="M246 138L256 144M254 121L261 127M240 154L247 159M233 169L239 173M226 183L232 188M218 197L224 201M183 255L189 260M175 268L181 273M168 280L176 286M161 291L171 297M150 307L156 311M141 322L145 325" />
      </g>
      <g stroke={BLUE}>
        <path d="M212 224L233 256 349 426 204 405" strokeWidth="1.3" />
        {left.map((y, i) => (
          <line key={y} x1={204} y1={y} x2={right[i][0]} y2={right[i][1]} />
        ))}
      </g>
      <circle cx="349" cy="426" r="1.5" fill={BLUE} />
      <LoadValues b={[[357, 114], [186, 419]]} offset={[18, 1]} />
      <Hinge at={[246, 142]} />
      <Hinge at={[206, 247]} />
      <Hinge at={[201, 255]} />
      <Hinge at={[165, 287]} />
      <Hinge at={[204, 218]} />
      <Label x={270} y={143}>0.13</Label>
      <Label x={238} y={191}>0.07</Label>
      <Label x={225} y={217}>0.08</Label>
      <Label x={209} y={242}>0.07</Label>
      <Label x={248} y={255}>0.35</Label>
      <Label x={184} y={296}>0.13</Label>
      <Label x={363} y={425}>1.73</Label>
      <Axes x={56} y={388} />
      <Axes x={204} y={405} />
      <path d="M376 47h1" stroke="#000" />
    </>
  );
}

function ViewMaster() {
  const rows = [484.5, 524.5, 555.5, 587.5, 619.5, 651.5, 682.5, 713.5, 745.5, 777.5, 808.5];
  return (
    <>
      <path d="M428.5 0V1000" stroke="#7cc4c4" />
      <path d="M0 839.5H1200" stroke="#108080" />
      <rect x="383" y="840" width="91" height="22" fill="#7dfc7d" />
      <path d="M428.5 840v22" stroke="#50c080" />
      <path d="M261 544L425 524M431 522L597 349" stroke="#111" strokeWidth="1.5" strokeDasharray="9 4" />
      <polygon points="79,629 763,234 778,261 94,656" fill="#8e8ef8" />
      <path d="M79 629L763 234" stroke="#7474e4" />
      <path d="M94 656L778 261" stroke="#6c6ce0" />
      <rect x="409" y="445" width="41" height="20" fill="url(#colBig)" opacity=".55" />
      <path d="M407 475l43-25V839H407z" fill="url(#colBig)" />
      <path d="M261 544L296 540M414 526l11-2M431 522l19-20M566 381L597 349" stroke="#50508c" strokeWidth="1.2" strokeDasharray="9 4" />
      <g stroke={BLUE}>
        <path d="M771 248L715 281 687 301 660 321 635 342 610 364 578 375 517 401 487 416 458 430 428 447 401 464 373 481 345 500 318 519 293 539 268 561 235 573 205 584 174 598 144 612 86 643" />
        <path d="M610 364L578 376 549 391 519 406 490 422 463 439 451 445 418 465 405 472 377 488 349 504 320 522 293 540 268 561" />
        <path d="M600 347L610 364M572 363L578 376M543 380L549 390M514 396L519 406M485 413L490 422M458 430L463 439M446 436L451 445M412 456L418 464M400 463L405 472M373 479L377 488M343 495L349 504M629 331L635 342M657 314L661 321M685 297L688 301M314 511L320 522M286 528L293 540M258 544L268 561M229 561L235 573M200 577L205 584M172 594L174 598" />
        <path d="M431 450L484 524 705 839M431 450L460 524 588 839" opacity=".85" />
        {rows.map((y) => (
          <g key={y}>
            <line x1={429} y1={y} x2={449} y2={y} opacity=".4" />
            <line x1={449} y1={y} x2={484.3 + (y - 524.3) * 0.698} y2={y} opacity=".75" />
          </g>
        ))}
        <path d="M450 839.5H705" />
      </g>
      <path d="M769 246h3v3h-3zM85 642h2v2h-2z" fill="#800010" />
      <path d="M587 838h2v2h-2zM704 838h2v2h-2z" fill={BLUE} />
      <Hinge at={[597, 349]} r={1.8} />
      <Hinge at={[431, 522]} r={1.8} />
      <Hinge at={[425, 524]} r={1.8} />
      <Hinge at={[261, 544]} r={1.8} />
      <Hinge at={[428.5, 449]} r={1.8} />
      <Label x={609} y={371} size={7}>0.13</Label>
      <Label x={446} y={445} size={7}>0.07</Label>
      <Label x={429} y={455} size={7}>0.01</Label>
      <Label x={412} y={465} size={7}>0.01</Label>
      <Label x={435} y={465} size={7}>0.08</Label>
      <Label x={470} y={524} size={7}>0.20</Label>
      <Label x={494} y={524} size={7}>0.35</Label>
      <Label x={267} y={569} size={7}>0.13</Label>
      <Label x={597} y={832} size={7}>1.00</Label>
      <Label x={715} y={832} size={7}>1.73</Label>
      <Axes x={428.5} y={839.5} withY={false} />
      <Axes x={68.5} y={880.5} withY={false} />
      <path d="M823 444h1" stroke="#000" />
    </>
  );
}

/* ---------- MDI ---------- */

interface WindowProps {
  title: string;
  active?: boolean;
  lines: string[];
  result: string;
  className?: string;
  titleClass?: string;
  children: ReactNode;
}

function MdiWindow({ title, active, lines, result, className, titleClass = "h-[29px]", children }: WindowProps) {
  const btn =
    "flex h-[18px] w-8 items-center justify-center rounded-[2px] border border-[#8492ae] bg-linear-to-b from-[#d3dfec] to-[#c0cfe0]";
  const glyph = { fill: "#fff", stroke: "#48506a", strokeWidth: 1 };
  return (
    <section
      className={clsx(
        "flex flex-col rounded-t-md border px-[7px] pb-[7px]",
        active
          ? "border-[#1c2430] bg-linear-to-b from-[#96b4d6] via-[#bcd2ea] via-[32px] to-[#bcd3ec] shadow-[inset_-1px_-1px_0_#35c8e8]"
          : "border-[#4c525c] bg-linear-to-b from-[#bccbda] via-[#d7e5f2] via-[32px] to-[#d7e5f2]",
        className
      )}
    >
      <div className={clsx("flex items-center gap-[2px] pl-px pr-[3px] pt-[5px]", titleClass)}>
        <svg viewBox="0 0 16 13" className="h-[13px] w-4" aria-hidden="true">
          <path d="M0 0h16v13H0z" fill="#1c2468" />
          <path d="M0 8.500h16M5.5 2v11M1 8l4.5-5 6 5M11 5v8M8 6l3-2 4 4" fill="none" stroke="#fff" strokeWidth="1.3" />
        </svg>
        <h2 className={clsx("mr-auto pl-[2px] text-xs", active ? "text-black" : "text-[#8f949c]")}>{title}</h2>
        <button aria-label="Minimizar ventana" className={btn}>
          <svg className="h-[5px] w-[11px]" viewBox="0 0 11 5">
            <rect x=".5" y=".5" width="10" height="4" rx="1" {...glyph} />
          </svg>
        </button>
        <button aria-label="Maximizar ventana" className={btn}>
          <svg className="h-[9px] w-[11px]" viewBox="0 0 11 9">
            <path d="M.5 .5h10v8H.5zM3.5 3.5v2h4v-2z" fillRule="evenodd" {...glyph} />
          </svg>
        </button>
        <button
          aria-label="Cerrar ventana"
          className={active ? "flex h-[18px] w-8 items-center justify-center rounded-[2px] border border-[#6a2420] bg-linear-to-b from-[#e0a195] via-[#c8503c] to-[#c05a48]" : btn}
        >
          <svg className="h-[9px] w-[11px]" viewBox="0 0 11 9">
            <path d="M.5.5h3L5.5 2.5 7.5.5h3L7.5 4.5l3 4h-3L5.5 6.5 3.5 8.5h-3l3-4z" {...glyph} />
          </svg>
        </button>
      </div>
      <div className="relative flex flex-1 flex-col justify-between overflow-hidden border border-white border-l-[#6e747e] border-t-[#6e747e] bg-[#fcfcfc]">
        <svg className={clsx("absolute inset-0 size-full", VIEW)} fill="none" role="img" aria-label={title}>
          {children}
        </svg>
        <div className={clsx("relative pl-1 pt-[5px] text-[11px] leading-[14px] text-black", VIEW)}>
          {lines.map((l) => (
            <p key={l}>{l}</p>
          ))}
        </div>
        <p className={clsx("relative pb-[6px] pl-1 text-[11px] leading-[14px] text-black", VIEW)}>{result}</p>
      </div>
    </section>
  );
}

// Callout arrows drawn across the windows
function Callouts() {
  return (
    <svg className="pointer-events-none absolute inset-0 z-20 size-full" aria-hidden="true">
      <g className="drop-shadow-[2px_5px_3px_rgba(0,0,0,0.5)]">
        <path d="M661 564C690 600 725 645 780 678 830 708 880 735 940 761L1330 935" fill="none" stroke="#5fa326" strokeWidth="8" strokeLinecap="round" />
        <polygon points="1363,949 1337,919 1323,950" fill="#5fa326" />
        <path d="M677 1079L780 1066 1160 1019 1436 983 1436 996 1160 1031 780 1075 677 1088A4.5 4.5 0 01677 1079z" fill="#4f7cca" />
        <polygon points="1484,983 1432,965 1439,1014" fill="#4f7cca" />
      </g>
      <g className="drop-shadow-[2px_3px_2px_rgba(0,0,0,0.4)]" fill="#f80808">
        <path d="M1207 158H1315V163H1207z" />
        <polygon points="1180,161 1210,145 1210,177" />
      </g>
    </svg>
  );
}

function StatusBar() {
  const modes = ["FORZC", "REJILLA", "CARTES", "REFENT", "GLN"];
  const cell = "flex items-center border-l border-[#8d929e] pl-px whitespace-nowrap";
  return (
    <footer className="flex h-[21px] items-stretch border-t border-[#a3a7b2] bg-linear-to-b from-[#e2e5ec] via-[#b4b9c3] to-[#cdd1d9] pl-1 text-[11px] text-[#2c2e38]">
      <span className="mr-auto self-center">Plano de trabajo</span>
      <div className="flex gap-[2px] pt-px text-xs">
        {modes.map((m) => (
          <button key={m} className="border border-b-0 border-black border-r-white px-px leading-[17px]">
            {m}
          </button>
        ))}
        <button className="border border-b-0 border-white border-r-[#8d929e] px-[2px] leading-[17px]">DXF</button>
      </div>
      <span className="w-[190px] self-center pl-[102px] whitespace-nowrap">SC: Global XYZ</span>
      <span className={clsx(cell, "w-[87px]")}>Plano: XZ</span>
      <span className={clsx(cell, "w-[74px] gap-[2px]")}><span>X:</span> -531.4 mm</span>
      <span className={clsx(cell, "w-[74px] gap-1")}><span>Y:</span> 0.0 mm</span>
      <span className={clsx(cell, "w-[73px] gap-[2px]")}><span>Z:</span> -130.4 mm</span>
    </footer>
  );
}

export default function App() {
  return (
    <div className={clsx("relative flex h-screen flex-col overflow-hidden bg-[#cfd3dc]", UI)}>
      <Gradients />
      <Header />
      <main className="flex min-h-0 flex-1 pt-px">
        <Navigator />
        <div className="ml-1 flex min-w-0 flex-1 border-l-2 border-t border-[#8b8f99] pb-[2px] pr-px">
          <div className="flex w-[492px] shrink-0 flex-col gap-px pb-[2px]">
            <MdiWindow
              title="PV Anlage 30°, CC1*"
              lines={["Esfuerzos internos M-y [kNm]", "CC1 : Succión de viento", "Cargas [kN/m]"]}
              result="Máx.M-y: 1.00, Mín. M-y: 0.00 kNm"
              className="flex-1"
            >
              <View30 />
            </MdiWindow>
            <MdiWindow
              title="PV Anlage 60°, CC1*"
              active
              lines={["Esfuerzos internos M-y [kNm]", "CC1 : Succión de viento", "Cargas [kN/m]"]}
              result="Máx.M-y: 1.73, Mín. M-y: 0.00 kNm"
              className="ml-[2px] flex-1"
            >
              <View60 />
            </MdiWindow>
          </div>
          <MdiWindow
            title="PV Anlage 30° Master, SC1"
            lines={["Esfuerzos internos M-y [kNm]", "SC1 : CC1<PV ANLAGE 30°>/Permanente o CC1<PV ANLAGE 60°>/Permanente"]}
            result="Máx.M-y: 1.73, Mín. M-y: 0.00 kNm"
            className="min-w-0 flex-1"
            titleClass="h-[30px]"
          >
            <ViewMaster />
          </MdiWindow>
        </div>
        <FactorsPanel />
      </main>
      <StatusBar />
      <Callouts />
    </div>
  );
}
